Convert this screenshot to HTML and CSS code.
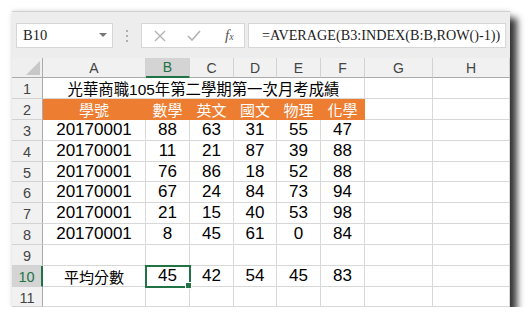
FILE: index.html
```html
<!DOCTYPE html>
<html lang="zh-Hant">
<head>
  <meta charset="UTF-8" />
  <title>平均分數</title>
  <link rel="stylesheet" href="styles.css">
</head>
<body>
  <div class="window">
    <div class="toolbar">
      <div class="namebox">
        <span>B10</span>
        <svg class="arrow" width="8" height="5" viewBox="0 0 8 5"><polygon points="0,0 8,0 4,4" fill="#777"/></svg>
      </div>
      <div class="dots"><i></i><i></i><i></i></div>
      <div class="fxbox">
        <svg width="14" height="14" viewBox="0 0 14 14"><path d="M2 2 L12 12 M12 2 L2 12" stroke="#b4b4b4" stroke-width="1.4" fill="none"/></svg>
        <svg width="16" height="14" viewBox="0 0 16 14"><path d="M2 7 L6 11 L14 2" stroke="#b4b4b4" stroke-width="1.6" fill="none"/></svg>
        <span class="fx">f<small>x</small></span>
      </div>
      <div class="formula">=AVERAGE(B3:INDEX(B:B,ROW()-1))</div>
    </div>

    <div class="sheet">
      <div class="corner"><svg width="14" height="14" viewBox="0 0 14 14"><polygon points="14,0 14,14 0,14" fill="#c8c8c8"/></svg></div>
      <div class="colhead">A</div>
      <div class="colhead active">B</div>
      <div class="colhead">C</div>
      <div class="colhead">D</div>
      <div class="colhead">E</div>
      <div class="colhead">F</div>
      <div class="colhead">G</div>
      <div class="colhead">H</div>

      <div class="rowhead">1</div>
      <div class="cell title">光華商職105年第二學期第一次月考成績</div>
      <div class="cell"></div><div class="cell"></div>

      <div class="rowhead">2</div>
      <div class="cell head">學號</div>
      <div class="cell head">數學</div>
      <div class="cell head">英文</div>
      <div class="cell head">國文</div>
      <div class="cell head">物理</div>
      <div class="cell head">化學</div>
      <div class="cell"></div><div class="cell"></div>

      <div class="rowhead">3</div>
      <div class="cell">20170001</div><div class="cell">88</div><div class="cell">63</div><div class="cell">31</div><div class="cell">55</div><div class="cell">47</div>
      <div class="cell"></div><div class="cell"></div>

      <div class="rowhead">4</div>
      <div class="cell">20170001</div><div class="cell">11</div><div class="cell">21</div><div class="cell">87</div><div class="cell">39</div><div class="cell">88</div>
      <div class="cell"></div><div class="cell"></div>

      <div class="rowhead">5</div>
      <div class="cell">20170001</div><div class="cell">76</div><div class="cell">86</div><div class="cell">18</div><div class="cell">52</div><div class="cell">88</div>
      <div class="cell"></div><div class="cell"></div>

      <div class="rowhead">6</div>
      <div class="cell">20170001</div><div class="cell">67</div><div class="cell">24</div><div class="cell">84</div><div class="cell">73</div><div class="cell">94</div>
      <div class="cell"></div><div class="cell"></div>

      <div class="rowhead">7</div>
      <div class="cell">20170001</div><div class="cell">21</div><div class="cell">15</div><div class="cell">40</div><div class="cell">53</div><div class="cell">98</div>
      <div class="cell"></div><div class="cell"></div>

      <div class="rowhead">8</div>
      <div class="cell">20170001</div><div class="cell">8</div><div class="cell">45</div><div class="cell">61</div><div class="cell">0</div><div class="cell">84</div>
      <div class="cell"></div><div class="cell"></div>

      <div class="rowhead">9</div>
      <div class="cell"></div><div class="cell"></div><div class="cell"></div><div class="cell"></div><div class="cell"></div><div class="cell"></div>
      <div class="cell"></div><div class="cell"></div>

      <div class="rowhead active">10</div>
      <div class="cell zh">平均分數</div><div class="cell selected">45</div><div class="cell">42</div><div class="cell">54</div><div class="cell">45</div><div class="cell">83</div>
      <div class="cell"></div><div class="cell"></div>

      <div class="rowhead">11</div>
      <div class="cell"></div><div class="cell"></div><div class="cell"></div><div class="cell"></div><div class="cell"></div><div class="cell"></div>
      <div class="cell"></div><div class="cell"></div>
    </div>
  </div>
</body>
</html>
```

FILE: styles.css
```css
body {
  margin: 0;
  background: #fff;
}

.window {
  margin: 11px 0 0 12px;
  width: 498px;
  height: 296px;
  background: #fff;
  box-shadow: 7px 7px 7px rgba(0, 0, 0, 0.78), 0 0 5px rgba(0, 0, 0, 0.15);
  overflow: hidden;
}

.toolbar {
  height: 47px;
  box-sizing: border-box;
  background: #ededed;
  border-top: 1px solid #d0d0d0;
  display: flex;
  align-items: flex-start;
  padding: 11px 4px 0 4px;
}

.namebox {
  width: 97px;
  height: 25px;
  box-sizing: border-box;
  background: #fff;
  border: 1px solid #d6d6d6;
  display: flex;
  align-items: center;
  justify-content: space-between;
  padding: 0 5px 0 6px;
  font-family: "Liberation Serif", serif;
  font-size: 14.5px;
  color: #222;
}

.dots {
  width: 28px;
  height: 25px;
  display: flex;
  flex-direction: column;
  align-items: center;
  justify-content: center;
  gap: 3px;
}

.dots i {
  width: 2px;
  height: 2px;
  background: #b0b0b0;
}

.fxbox {
  width: 104px;
  height: 25px;
  box-sizing: border-box;
  background: #fff;
  border: 1px solid #d6d6d6;
  display: flex;
  align-items: center;
  padding: 0 6px 0 11px;
  gap: 19px;
}

.fx {
  font-family: "Liberation Serif", serif;
  font-style: italic;
  font-size: 15px;
  color: #555;
  margin-left: 4px;
}

.fx small {
  font-size: 10px;
}

.formula {
  flex: 1;
  height: 25px;
  box-sizing: border-box;
  margin-left: 3px;
  background: #fff;
  border: 1px solid #d6d6d6;
  padding-left: 13px;
  line-height: 23px;
  font-family: "Liberation Serif", serif;
  font-size: 14.2px;
  color: #222;
  white-space: nowrap;
}

.sheet {
  display: grid;
  grid-template-columns: 31px 103px 44px 44px 43px 44px 44px 68px 77px;
  grid-template-rows: 20px 21px 21px 21px 21px 20px 21px 21px 21px 21px 21px 20px;
}

.corner {
  background: #efefef;
  border-right: 1px solid #ababab;
  border-bottom: 1px solid #ababab;
  display: flex;
  align-items: flex-end;
  justify-content: flex-end;
  padding: 0 2px 2px 0;
}

.colhead, .rowhead {
  box-sizing: border-box;
  background: #f1f1f1;
  font-family: "Liberation Sans", sans-serif;
  font-size: 14px;
  color: #444;
  display: flex;
  align-items: center;
  justify-content: center;
}

.rowhead {
  font-size: 14.5px;
  padding-top: 2px;
}

.colhead {
  border-right: 1px solid #d2d2d2;
  border-bottom: 1px solid #ababab;
}

.rowhead {
  border-right: 1px solid #ababab;
  border-bottom: 1px solid #d2d2d2;
}

.colhead.active {
  background: #d4d4d4;
  color: #217346;
  border-bottom: 2px solid #217346;
}

.rowhead.active {
  background: #d4d4d4;
  color: #217346;
  border-right: 2px solid #217346;
}

.cell {
  box-sizing: border-box;
  border-right: 1px solid #d8d8d8;
  border-bottom: 1px solid #d8d8d8;
  display: flex;
  align-items: center;
  justify-content: center;
  font-family: "Liberation Sans", "Noto Sans CJK TC", sans-serif;
  font-size: 17px;
  color: #000;
}

.title {
  grid-column: span 6;
  font-family: "Liberation Sans", "Noto Sans CJK TC", sans-serif;
  font-size: 15.4px;
}

.head {
  background: #ed7d31;
  border-color: #ed7d31;
  color: #fff;
  font-family: "Noto Sans CJK TC", sans-serif;
  font-size: 15px;
}

.zh {
  font-family: "Noto Sans CJK TC", sans-serif;
  font-size: 15px;
}

.selected {
  position: relative;
  outline: 2px solid #217346;
  outline-offset: -1px;
}

.selected::after {
  content: "";
  position: absolute;
  right: -3px;
  bottom: -3px;
  width: 5px;
  height: 5px;
  background: #217346;
  border: 1px solid #fff;
}
```
